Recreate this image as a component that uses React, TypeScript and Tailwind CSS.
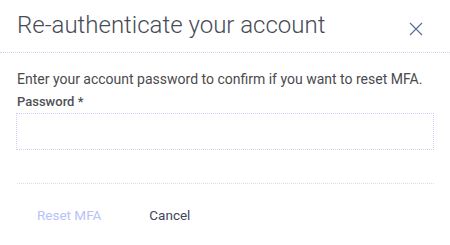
export default function App() {
  return (
    <div className="w-[450px] h-[245px] bg-white font-['Roboto',sans-serif] overflow-hidden">
      <header className="h-[53px] flex items-center justify-between pl-[17px] pr-[27px] border-b border-dotted border-[#c8d8f4]">
        <h1 className="text-[24px] leading-[28px] font-light text-[#474b57] mt-[-2px]">
          Re-authenticate your account
        </h1>
        <button className="text-[#5d6e93] mt-[6px]" aria-label="Close">
          <svg width="14" height="14" viewBox="0 0 14 14" fill="none" stroke="currentColor" strokeWidth="1.2">
            <path d="M1 1L13 13M13 1L1 13" />
          </svg>
        </button>
      </header>
      <div className="px-[16px] pt-[16px]">
        <p className="text-[14px] leading-[20px] text-[#4a4a4e] pl-[1px]">
          Enter your account password to confirm if you want to reset MFA.
        </p>
        <label className="block mt-[4px] pl-[1px] text-[13px] leading-[18px] font-medium text-[#505158]">
          Password *
        </label>
        <input
          type="password"
          className="mt-[2px] block w-full h-[37px] border border-dotted border-[#ccd3f4] outline-none"
        />
        <div className="mt-[33px] ml-[1px] border-t border-dotted border-[#cfe0ea]" />
        <div className="flex items-center mt-[13px] pl-[1px]">
          <button disabled className="px-[20px] h-[36px] text-[13.5px] text-[#b6c3fb]">
            Reset MFA
          </button>
          <button className="pl-[28px] pr-[20px] h-[36px] text-[13.5px] text-[#43465a]">Cancel</button>
        </div>
      </div>
    </div>
  );
}
